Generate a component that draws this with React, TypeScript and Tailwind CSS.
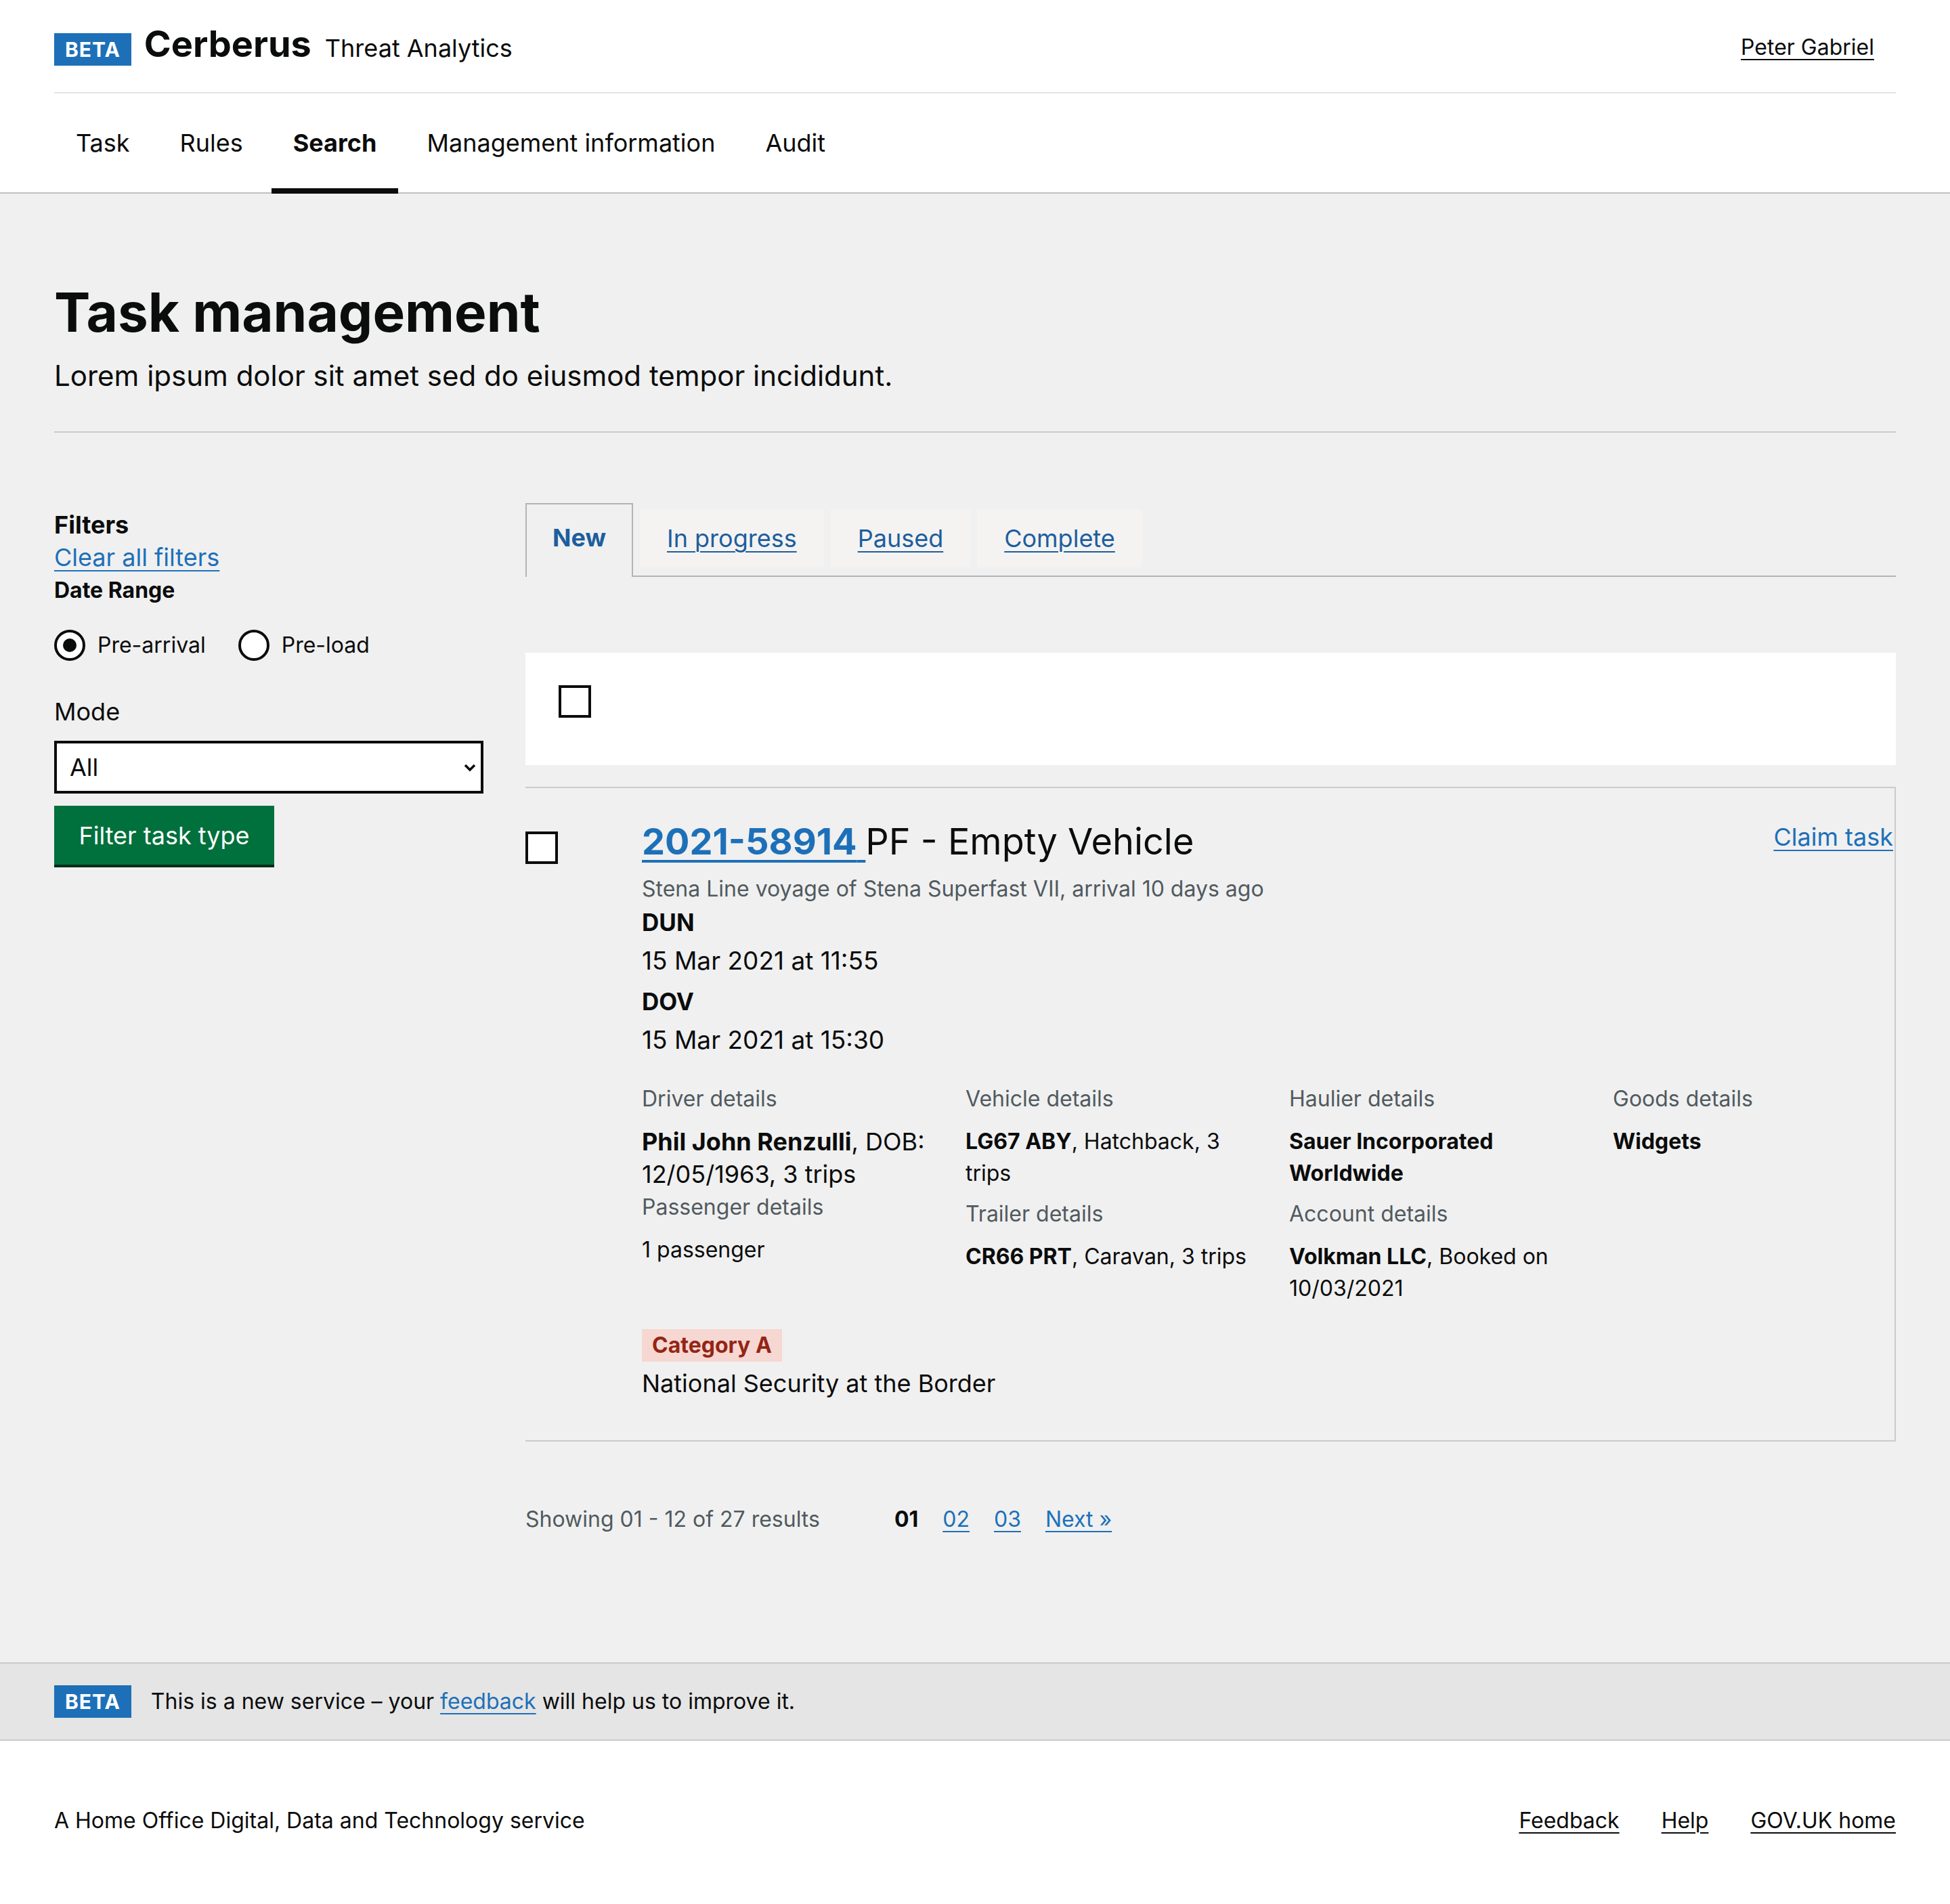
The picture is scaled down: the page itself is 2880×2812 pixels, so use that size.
import { useState } from "react";

const navItems = ["Task", "Rules", "Search", "Management information", "Audit"];
const tabs = ["New", "In progress", "Paused", "Complete"];

function BetaTag() {
  return (
    <span className="inline-block h-[48px] bg-[#1d70b8] px-[16px] text-[30px] leading-[48px] font-bold tracking-[1px] text-white">
      BETA
    </span>
  );
}

function Checkbox({ className = "" }: { className?: string }) {
  return (
    <div
      className={`h-[48px] w-[48px] shrink-0 border-[4px] border-[#0b0c0c] bg-white ${className}`}
    />
  );
}

function Radio({ label, checked }: { label: string; checked?: boolean }) {
  return (
    <label className="flex items-center">
      <span className="flex h-[46px] w-[46px] items-center justify-center rounded-full border-[4px] border-[#0b0c0c] bg-white">
        {checked && <span className="h-[20px] w-[20px] rounded-full bg-[#0b0c0c]" />}
      </span>
      <span className="ml-[18px] text-[32px] leading-[40px]">{label}</span>
    </label>
  );
}

function Detail({
  label,
  children,
  big,
  className = "",
}: {
  label: string;
  children: React.ReactNode;
  big?: boolean;
  className?: string;
}) {
  return (
    <div className={className}>
      <div className="text-[32px] leading-[40px] text-[#505a5f]">{label}</div>
      <div
        className={
          big
            ? "mt-[19px] text-[36px] leading-[48px]"
            : "mt-[19px] text-[32px] leading-[47px]"
        }
      >
        {children}
      </div>
    </div>
  );
}

export default function App() {
  const [active, setActive] = useState("New");
  const [mode, setMode] = useState("All");

  return (
    <div className="flex flex-col bg-[#f0f0f0] font-['Inter',sans-serif] text-[#0b0c0c]">
      {/* header */}
      <header className="bg-white">
        <div className="px-[80px]">
          <div className="flex h-[138px] items-start justify-between border-b-2 border-[#e5e5e5] pt-[33px]">
            <div className="flex items-baseline">
              <BetaTag />
              <span className="ml-[19px] text-[54px] leading-[64px] font-bold">Cerberus</span>
              <span className="ml-[20px] text-[36px] leading-[48px]">Threat Analytics</span>
            </div>
            <a
              href="#"
              className="mt-[17px] mr-[32px] text-[32px] leading-[40px] underline decoration-2 underline-offset-[6px]"
            >
              Peter Gabriel
            </a>
          </div>
        </div>
        <nav className="border-b-2 border-[#bfc1c3]">
          <ul className="flex gap-[10px] px-[80px]">
            {navItems.map((item) => (
              <li
                key={item}
                className={`relative flex h-[146px] items-center px-[32px] text-[36px] leading-[46px] ${
                  item === "Search" ? "font-bold" : ""
                }`}
              >
                {item}
                {item === "Search" && (
                  <span className="absolute right-0 bottom-[-2px] left-0 h-[8px] bg-[#0b0c0c]" />
                )}
              </li>
            ))}
          </ul>
        </nav>
      </header>

      {/* main */}
      <main className="px-[80px] pt-[135px]">
        <h1 className="text-[80px] leading-[80px] font-bold">Task management</h1>
        <p className="mt-[29px] text-[42px] leading-[50px]">
          Lorem ipsum dolor sit amet sed do eiusmod tempor incididunt.
        </p>
        <hr className="mt-[57px] border-t-2 border-[#cbcbcb]" />

        <div className="mt-[104px] flex gap-[61px]">
          {/* filters */}
          <aside className="w-[635px] shrink-0 pt-[8px]">
            <h2 className="text-[36px] leading-[48px] font-bold">Filters</h2>
            <a
              href="#"
              className="block w-fit text-[36px] leading-[48px] text-[#1d70b8] underline decoration-2 underline-offset-[6px]"
            >
              Clear all filters
            </a>
            <h3 className="mt-[5px] text-[32px] leading-[40px] font-bold">Date Range</h3>
            <div className="mt-[38px] flex gap-[48px]">
              <Radio label="Pre-arrival" checked />
              <Radio label="Pre-load" />
            </div>
            <label className="mt-[55px] block text-[36px] leading-[40px]">Mode</label>
            <div className="relative mt-[23px] w-[634px]">
              <select
                value={mode}
                onChange={(e) => setMode(e.target.value)}
                className="h-[78px] w-full appearance-none rounded-none border-[4px] border-[#0b0c0c] bg-white pl-[19px] text-[36px] leading-[46px] outline-none"
              >
                <option>All</option>
                <option>RoRo unaccompanied freight</option>
                <option>RoRo accompanied freight</option>
                <option>RoRo tourist</option>
              </select>
              <svg
                className="pointer-events-none absolute top-[33px] right-[10px]"
                width="20"
                height="13"
                viewBox="0 0 20 13"
              >
                <polyline
                  points="3,3 10,10 17,3"
                  fill="none"
                  stroke="#0b0c0c"
                  strokeWidth="3.5"
                />
              </svg>
            </div>
            <button className="mt-[18px] h-[91px] w-[325px] border-b-[4px] border-[#002d18] bg-[#00703c] text-[36px] leading-[46px] text-white">
              Filter task type
            </button>
          </aside>

          {/* results */}
          <section className="min-w-0 flex-1">
            <div className="flex items-start border-b-2 border-[#b1b4b6]">
              {tabs.map((t) =>
                t === active ? (
                  <a
                    key={t}
                    href="#"
                    onClick={(e) => {
                      e.preventDefault();
                      setActive(t);
                    }}
                    className="relative z-10 mb-[-2px] block h-[109px] border-2 border-b-0 border-[#b1b4b6] bg-[#f0f0f0] px-[38px] pt-[26px] text-[36px] leading-[46px] font-bold text-[#1d5e9e]"
                  >
                    {t}
                  </a>
                ) : (
                  <a
                    key={t}
                    href="#"
                    onClick={(e) => {
                      e.preventDefault();
                      setActive(t);
                    }}
                    className="mt-[9px] ml-[10px] block h-[86px] bg-[#f4f3f2] px-[40px] pt-[20px] text-[36px] leading-[46px] text-[#1d5e9e] underline decoration-2 underline-offset-[6px]"
                  >
                    {t}
                  </a>
                ),
              )}
            </div>

            <div className="mt-[112px] bg-white pt-[48px] pb-[70px] pl-[49px]">
              <Checkbox />
            </div>

            {/* task card */}
            <div className="mt-[32px] border-t-2 border-r-2 border-b-2 border-[#cbcbcb] pt-[47px] pb-[60px]">
              <div className="flex">
                <Checkbox className="mt-[17px]" />
                <div className="ml-[124px] min-w-0 flex-1">
                  <div className="flex items-start justify-between">
                    <h3 className="text-[54px] leading-[64px]">
                      <a
                        href="#"
                        className="font-bold text-[#1d70b8] underline decoration-[4px] underline-offset-[8px]"
                      >
                        2021-58914{" "}
                      </a>
                      PF - Empty Vehicle
                    </h3>
                    <a
                      href="#"
                      className="mt-[2px] mr-[2px] text-[36px] leading-[46px] text-[#1d70b8] underline decoration-2 underline-offset-[6px]"
                    >
                      Claim task
                    </a>
                  </div>
                  <p className="mt-[18px] text-[32px] leading-[40px] text-[#505a5f]">
                    Stena Line voyage of Stena Superfast VII, arrival 10 days ago
                  </p>
                  <div className="mt-[9px] text-[35px] leading-[40px] font-bold">DUN</div>
                  <div className="mt-[13px] text-[37px] leading-[48px]">15 Mar 2021 at 11:55</div>
                  <div className="mt-[16px] text-[35px] leading-[40px] font-bold">DOV</div>
                  <div className="mt-[13px] text-[37px] leading-[48px]">15 Mar 2021 at 15:30</div>

                  <div className="mt-[43px] grid grid-cols-[repeat(4,430px)] gap-x-[48px]">
                    <div>
                      <Detail label="Driver details" big>
                        <b>Phil John Renzulli</b>, DOB: 12/05/1963, 3 trips
                      </Detail>
                      <Detail label="Passenger details" className="mt-[5px]">
                        1 passenger
                      </Detail>
                    </div>
                    <div>
                      <Detail label="Vehicle details">
                        <b>LG67 ABY</b>, Hatchback, 3 trips
                      </Detail>
                      <Detail label="Trailer details" className="mt-[17px]">
                        <b>CR66 PRT</b>, Caravan, 3 trips
                      </Detail>
                    </div>
                    <div>
                      <Detail label="Haulier details">
                        <b>Sauer Incorporated Worldwide</b>
                      </Detail>
                      <Detail label="Account details" className="mt-[17px]">
                        <b>Volkman LLC</b>, Booked on 10/03/2021
                      </Detail>
                    </div>
                    <div>
                      <Detail label="Goods details">
                        <b>Widgets</b>
                      </Detail>
                    </div>
                  </div>

                  <span className="mt-[37px] inline-block h-[48px] bg-[#f6d7d2] px-[15px] text-[32px] leading-[48px] font-bold text-[#942514]">
                    Category A
                  </span>
                  <p className="mt-[8px] text-[36px] leading-[48px]">National Security at the Border</p>
                </div>
              </div>
            </div>

            {/* pagination */}
            <div className="mt-[95px] flex items-baseline text-[32px] leading-[40px]">
              <span className="text-[#505a5f]">Showing 01 - 12 of 27 results</span>
              <div className="ml-[110px] flex gap-[36px]">
                <span className="font-bold">01</span>
                <a href="#" className="text-[#1d70b8] underline decoration-2 underline-offset-[6px]">
                  02
                </a>
                <a href="#" className="text-[#1d70b8] underline decoration-2 underline-offset-[6px]">
                  03
                </a>
                <a href="#" className="text-[#1d70b8] underline decoration-2 underline-offset-[6px]">
                  Next »
                </a>
              </div>
            </div>
          </section>
        </div>
      </main>

      {/* phase banner */}
      <div className="mt-[191px] border-t-2 border-b-2 border-[#cbcbcb] bg-[#e5e5e5] px-[80px] pt-[32px] pb-[32px]">
        <div className="flex items-center">
          <BetaTag />
          <p className="ml-[29px] text-[32px] leading-[40px]">
            This is a new service – your{" "}
            <a href="#" className="text-[#1d70b8] underline decoration-2 underline-offset-[6px]">
              feedback
            </a>{" "}
            will help us to improve it.
          </p>
        </div>
      </div>

      {/* footer */}
      <footer className="bg-white px-[80px] pt-[98px] pb-[102px]">
        <div className="flex items-center justify-between text-[32px] leading-[40px]">
          <p>A Home Office Digital, Data and Technology service</p>
          <ul className="flex gap-[62px]">
            {["Feedback", "Help", "GOV.UK home"].map((l) => (
              <li key={l}>
                <a href="#" className="underline decoration-2 underline-offset-[6px]">
                  {l}
                </a>
              </li>
            ))}
          </ul>
        </div>
      </footer>
    </div>
  );
}
